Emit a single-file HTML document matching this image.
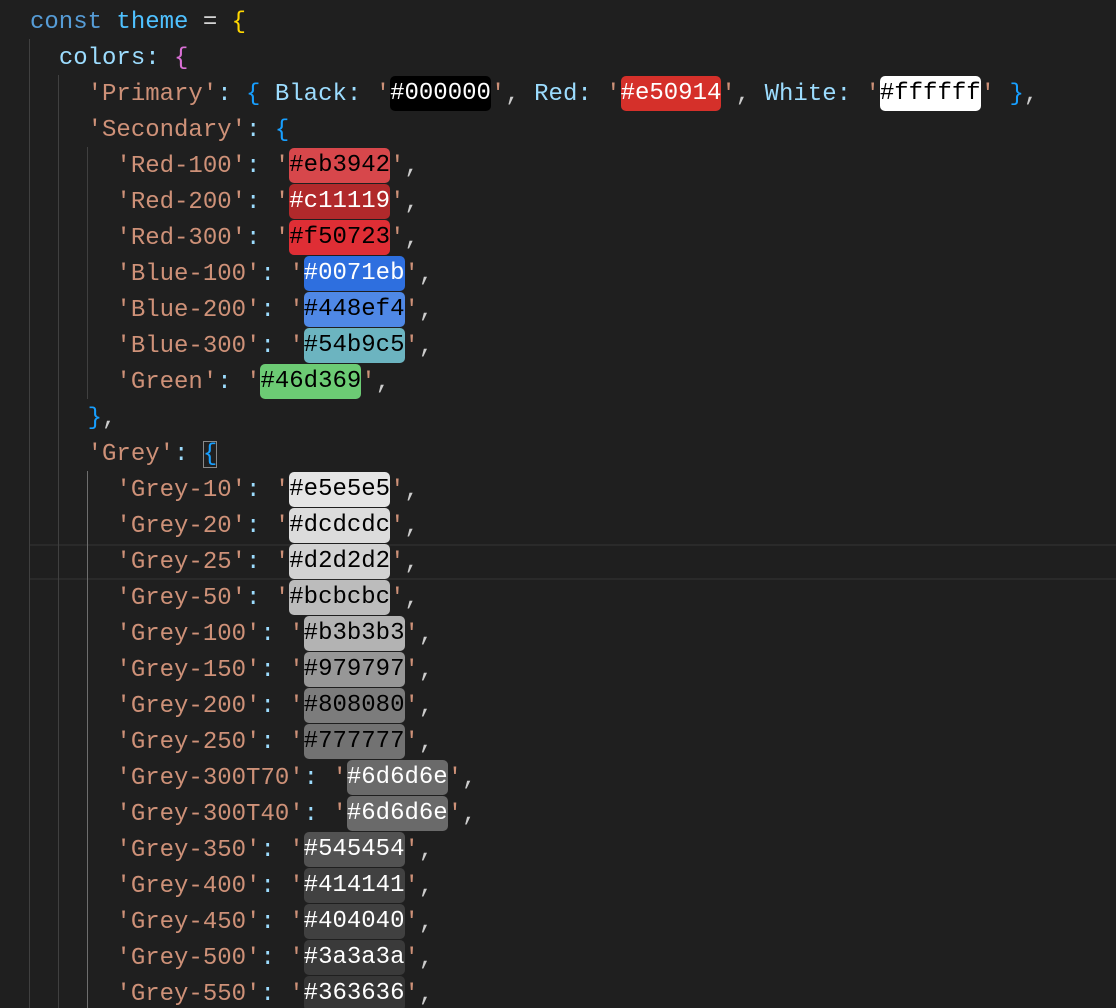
<!DOCTYPE html>
<html><head><meta charset="utf-8"><style>
html,body{margin:0;padding:0;background:#1f1f1f;width:1116px;height:1008px;overflow:hidden}
#ed{position:relative;width:1116px;height:1008px;font-family:"Liberation Mono",monospace;font-size:24px}
.l{position:absolute;left:30px;height:36px;line-height:36px;white-space:pre;color:#d4d4d4;margin-top:2px}
.g{position:absolute;width:1px;background:#404040}
.k{color:#569cd6}.v{color:#4fc1ff}.p{color:#9cdcfe}.s{color:#ce9178}
.y{color:#ffd700}.m{color:#da70d6}.b{color:#179fff}.c{color:#cccccc}
.sw{display:inline-block;height:35px;line-height:35px;border-radius:5px;vertical-align:top;margin-top:-1px}
.w{color:#fff}.d{color:#000}
#cur{position:absolute;left:30px;top:544px;width:1090px;height:32px;border-top:2px solid #2a2a2a;border-bottom:2px solid #2a2a2a}
</style></head><body><div id="ed">
<div id="cur"></div>
<div class="g" style="left:29px;top:39px;height:969px"></div>
<div class="g" style="left:58px;top:75px;height:933px"></div>
<div class="g" style="left:87px;top:147px;height:252px"></div>
<div class="g" style="left:87px;top:471px;height:537px;background:#6e6e6e"></div>

<div class="l" style="top:3px"><span class="k">const</span> <span class="v">theme</span> = <span class="y">{</span></div>
<div class="l" style="top:39px">  <span class="p">colors</span><span class="p">:</span> <span class="m">{</span></div>
<div class="l" style="top:75px">    <span class="s">'Primary'</span><span class="p">:</span> <span class="b">{</span> <span class="p">Black:</span> <span class="s">'</span><span class="sw w" style="background:#000">#000000</span><span class="s">'</span><span class="c">,</span> <span class="p">Red:</span> <span class="s">'</span><span class="sw w" style="background:#d5302a">#e50914</span><span class="s">'</span><span class="c">,</span> <span class="p">White:</span> <span class="s">'</span><span class="sw d" style="background:#fff">#ffffff</span><span class="s">'</span> <span class="b">}</span><span class="c">,</span></div>
<div class="l" style="top:111px">    <span class="s">'Secondary'</span><span class="p">:</span> <span class="b">{</span></div>
<div class="l" style="top:147px">      <span class="s">'Red-100'</span><span class="p">:</span> <span class="s">'</span><span class="sw d" style="background:#d7474b">#eb3942</span><span class="s">'</span><span class="c">,</span></div>
<div class="l" style="top:183px">      <span class="s">'Red-200'</span><span class="p">:</span> <span class="s">'</span><span class="sw w" style="background:#b1292b">#c11119</span><span class="s">'</span><span class="c">,</span></div>
<div class="l" style="top:219px">      <span class="s">'Red-300'</span><span class="p">:</span> <span class="s">'</span><span class="sw d" style="background:#df2e35">#f50723</span><span class="s">'</span><span class="c">,</span></div>
<div class="l" style="top:255px">      <span class="s">'Blue-100'</span><span class="p">:</span> <span class="s">'</span><span class="sw w" style="background:#2e6fdf">#0071eb</span><span class="s">'</span><span class="c">,</span></div>
<div class="l" style="top:291px">      <span class="s">'Blue-200'</span><span class="p">:</span> <span class="s">'</span><span class="sw d" style="background:#4f88e6">#448ef4</span><span class="s">'</span><span class="c">,</span></div>
<div class="l" style="top:327px">      <span class="s">'Blue-300'</span><span class="p">:</span> <span class="s">'</span><span class="sw d" style="background:#6cb4c0">#54b9c5</span><span class="s">'</span><span class="c">,</span></div>
<div class="l" style="top:363px">      <span class="s">'Green'</span><span class="p">:</span> <span class="s">'</span><span class="sw d" style="background:#6ccb74">#46d369</span><span class="s">'</span><span class="c">,</span></div>
<div class="l" style="top:399px">    <span class="b">}</span><span class="c">,</span></div>
<div class="l" style="top:435px">    <span class="s">'Grey'</span><span class="p">:</span> <span class="b" style="outline:1px solid #888;outline-offset:-1px">{</span></div>
<div class="l" style="top:471px">      <span class="s">'Grey-10'</span><span class="p">:</span> <span class="s">'</span><span class="sw d" style="background:#e5e5e5">#e5e5e5</span><span class="s">'</span><span class="c">,</span></div>
<div class="l" style="top:507px">      <span class="s">'Grey-20'</span><span class="p">:</span> <span class="s">'</span><span class="sw d" style="background:#dcdcdc">#dcdcdc</span><span class="s">'</span><span class="c">,</span></div>
<div class="l" style="top:543px">      <span class="s">'Grey-25'</span><span class="p">:</span> <span class="s">'</span><span class="sw d" style="background:#d2d2d2">#d2d2d2</span><span class="s">'</span><span class="c">,</span></div>
<div class="l" style="top:579px">      <span class="s">'Grey-50'</span><span class="p">:</span> <span class="s">'</span><span class="sw d" style="background:#bcbcbc">#bcbcbc</span><span class="s">'</span><span class="c">,</span></div>
<div class="l" style="top:615px">      <span class="s">'Grey-100'</span><span class="p">:</span> <span class="s">'</span><span class="sw d" style="background:#b3b3b3">#b3b3b3</span><span class="s">'</span><span class="c">,</span></div>
<div class="l" style="top:651px">      <span class="s">'Grey-150'</span><span class="p">:</span> <span class="s">'</span><span class="sw d" style="background:#979797">#979797</span><span class="s">'</span><span class="c">,</span></div>
<div class="l" style="top:687px">      <span class="s">'Grey-200'</span><span class="p">:</span> <span class="s">'</span><span class="sw d" style="background:#7c7c7c">#808080</span><span class="s">'</span><span class="c">,</span></div>
<div class="l" style="top:723px">      <span class="s">'Grey-250'</span><span class="p">:</span> <span class="s">'</span><span class="sw d" style="background:#727272">#777777</span><span class="s">'</span><span class="c">,</span></div>
<div class="l" style="top:759px">      <span class="s">'Grey-300T70'</span><span class="p">:</span> <span class="s">'</span><span class="sw w" style="background:#6a6a6a">#6d6d6e</span><span class="s">'</span><span class="c">,</span></div>
<div class="l" style="top:795px">      <span class="s">'Grey-300T40'</span><span class="p">:</span> <span class="s">'</span><span class="sw w" style="background:#6a6a6a">#6d6d6e</span><span class="s">'</span><span class="c">,</span></div>
<div class="l" style="top:831px">      <span class="s">'Grey-350'</span><span class="p">:</span> <span class="s">'</span><span class="sw w" style="background:#525252">#545454</span><span class="s">'</span><span class="c">,</span></div>
<div class="l" style="top:867px">      <span class="s">'Grey-400'</span><span class="p">:</span> <span class="s">'</span><span class="sw w" style="background:#414141">#414141</span><span class="s">'</span><span class="c">,</span></div>
<div class="l" style="top:903px">      <span class="s">'Grey-450'</span><span class="p">:</span> <span class="s">'</span><span class="sw w" style="background:#404040">#404040</span><span class="s">'</span><span class="c">,</span></div>
<div class="l" style="top:939px">      <span class="s">'Grey-500'</span><span class="p">:</span> <span class="s">'</span><span class="sw w" style="background:#3a3a3a">#3a3a3a</span><span class="s">'</span><span class="c">,</span></div>
<div class="l" style="top:975px">      <span class="s">'Grey-550'</span><span class="p">:</span> <span class="s">'</span><span class="sw w" style="background:#363636">#363636</span><span class="s">'</span><span class="c">,</span></div>
</div></body></html>
